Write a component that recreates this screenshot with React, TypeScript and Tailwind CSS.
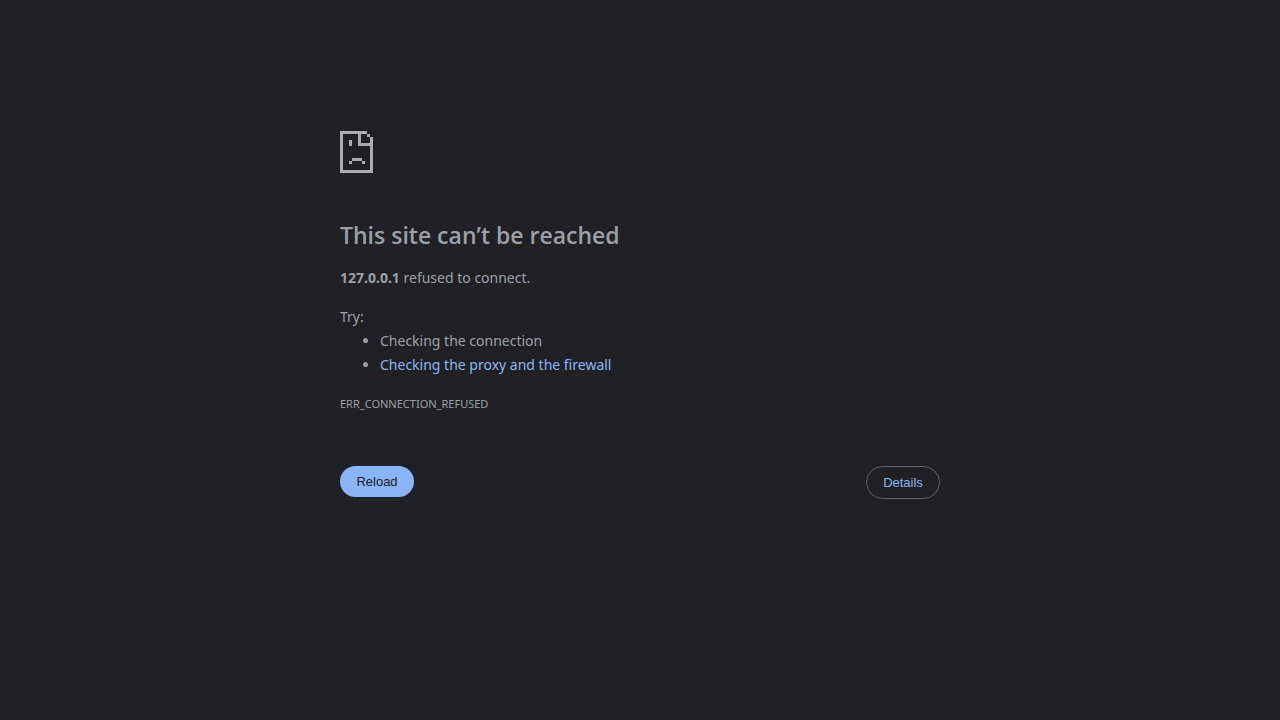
const suggestions = [
  { text: "Checking the connection" },
  { text: "Checking the proxy and the firewall", href: "#buttons" },
];

function SadPageIcon() {
  return (
    <svg
      className="w-[33px] h-[42px]"
      viewBox="0 0 33 42"
      fill="#acacac"
      shapeRendering="crispEdges"
      aria-hidden="true"
    >
      {/* Page outline */}
      <path d="M0 0h27v3H3v36h27V6h3v36H0z" />
      {/* Folded corner */}
      <path d="M18 3h3v9h9v3H18zM27 3h3v3h-3z" />
      {/* Face */}
      <path d="M9 9h3v6H9zM12 27h10v3H12zM9 30h3v3H9zM22 30h3v3h-3z" />
    </svg>
  );
}

export default function App() {
  return (
    <div className="min-h-screen bg-[#202124] px-6 pt-[131px] font-['Noto_Sans','Open_Sans',sans-serif] text-sm leading-6 text-[#9aa0a6]">
      <main className="mx-auto max-w-[600px]">
        <SadPageIcon />

        <h1 className="mt-12 font-['Open_Sans','Noto_Sans',sans-serif] text-[23px] leading-7 font-semibold">
          This site can’t be reached
        </h1>
        <p className="mt-[17px]">
          <strong className="font-bold">127.0.0.1</strong> refused to connect.
        </p>

        <div className="mt-[15px]">
          <p>Try:</p>
          <ul className="list-disc pl-10">
            {suggestions.map((item) => (
              <li key={item.text}>
                {item.href ? (
                  <a href={item.href} className="text-[#8ab4f8]">
                    {item.text}
                  </a>
                ) : (
                  item.text
                )}
              </li>
            ))}
          </ul>
        </div>

        <div className="mt-[17px] text-[11px] leading-5">ERR_CONNECTION_REFUSED</div>

        <div
          id="buttons"
          className="mt-[52px] flex items-start justify-between font-['Liberation_Sans',sans-serif] text-[13px] leading-[15px]"
        >
          <button type="button" className="min-w-[74px] rounded-full bg-[#8ab4f8] px-4 py-2 text-[#202124]">
            Reload
          </button>
          <button
            type="button"
            className="min-w-[74px] rounded-full border border-[#5f6368] px-4 py-2 text-[#8ab4f8]"
          >
            Details
          </button>
        </div>
      </main>
    </div>
  );
}
